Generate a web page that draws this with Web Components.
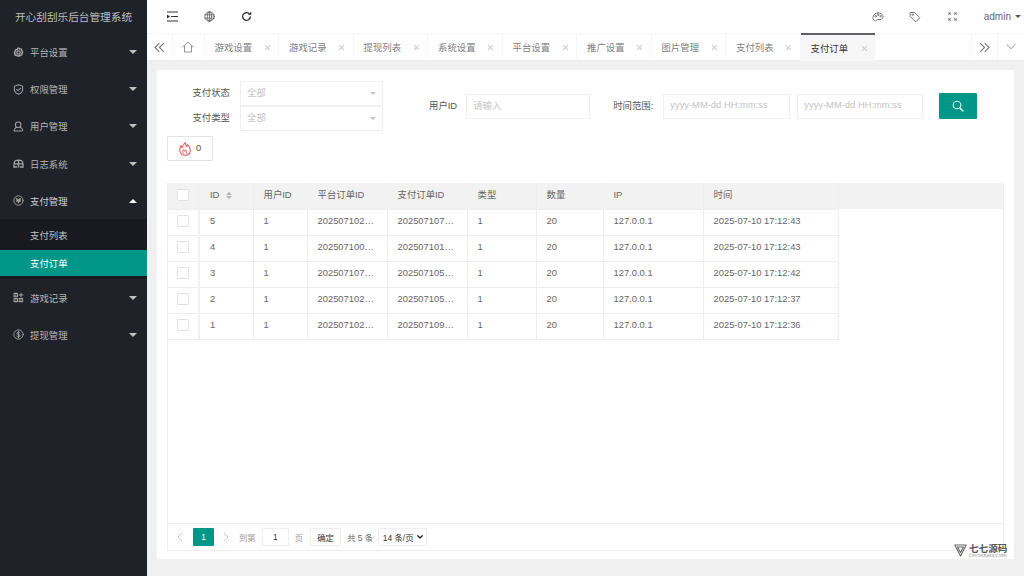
<!DOCTYPE html>
<html lang="zh"><head><meta charset="utf-8"><title>支付订单</title>
<style>
html,body{margin:0;height:100%;overflow:hidden}
body{font:9.4px "Liberation Sans","Noto Sans CJK SC",sans-serif;color:#666}
</style></head><body>
<app-shell>
  <side-menu slot="side" title-text="开心刮刮乐后台管理系统"></side-menu>
  <top-bar slot="top"></top-bar>
  <tab-bar slot="top"></tab-bar>
  <content-card slot="main">
    <filter-form></filter-form>
    <data-table></data-table>
  </content-card>
  <water-mark slot="over"></water-mark>
</app-shell>
<script>
const svg=(w,h,vb,body,extra='')=>`<svg width="${w}" height="${h}" viewBox="${vb}" fill="none" stroke="currentColor" stroke-linecap="round" stroke-linejoin="round" ${extra}>${body}</svg>`;
const I={
 gear:`<circle cx="8" cy="8" r="2.400" stroke-width="1.800"/><path stroke-width="1.900" d="M6.800 1.600h2.400l.5 1.700 1.600-.8 1.700 1.700-.8 1.600 1.700.5v2.400l-1.700.5.8 1.600-1.700 1.700-1.600-.8-.5 1.700H6.800l-.5-1.700-1.600.8L3 11.800l.8-1.600-1.700-.5V7.300l1.700-.5L3 5.200 4.700 3.500l1.600.8z"/>`,
 shield:`<path stroke-width="1.500" d="M8 1.200l6 1.900v4.400c0 3.500-2.700 6-6 7.300-3.300-1.300-6-3.800-6-7.300V3.100z"/><path stroke-width="1.500" d="M5.300 7.800l2 2 3.500-3.500"/>`,
 user:`<circle cx="7.500" cy="5.300" r="4" stroke-width="1.500"/><path stroke-width="1.500" d="M4.800 9C3 10 1.700 11.500 1.500 14.500h9.500M10.500 9c1.800.8 3.300 2.300 3.800 4.500-.5.800-1.300 1-2.800 1"/>`,
 log:`<path stroke-width="1.800" d="M1.500 13V8.500C1.500 5 4 3 8 3s6.500 2 6.500 5.500V13M8 3.500V13M1.500 8.500h13"/><path stroke-width="2" d="M1.500 13h4M10.500 13h4"/>`,
 pay:`<circle cx="8" cy="8" r="6.800" stroke-width="1.300"/><path fill="currentColor" stroke-width=".8" d="M4.800 4.500L8 6.500l3.200-2-.6 3.500 1 1-2.400.6L8 12 6.800 9.600 4.400 9l1-1z"/>`,
 game:`<g stroke-width="1.500"><rect x="1.500" y="2" width="5" height="5"/><rect x="1.500" y="9.500" width="5" height="4.500"/><rect x="9" y="9.500" width="5" height="4.500"/><path d="M11.700 1.500v5.700M8.800 4.300h5.700"/></g><path fill="currentColor" stroke="none" d="M3 3.500h2v2H3zM3 11h2v1.500H3zM10.500 11h2v1.500h-2z"/>`,
 money:`<circle cx="8" cy="8" r="6.800" stroke-width="1.300"/><path stroke-width="1.400" d="M10.300 5.800C9.800 4.900 9 4.600 8 4.600c-1.300 0-2.300.6-2.300 1.700 0 2.500 4.700 1 4.700 3.500 0 1.100-1.100 1.700-2.400 1.700-1.100 0-2-.4-2.500-1.300M8 3.300v9.500"/>`
};
const def=(n,c)=>customElements.define(n,c);
class Base extends HTMLElement{constructor(){super();this.attachShadow({mode:'open'})}}

def('app-shell',class extends Base{connectedCallback(){this.shadowRoot.innerHTML=`<style>
:host{display:grid;grid-template-columns:147px 1fr;grid-template-rows:61px 1fr;height:576px;width:1024px;background:#f0f0f0;position:relative;overflow:hidden}
.side{grid-row:1/3;min-height:0}
.top{display:flex;flex-direction:column;min-width:0;background:#fff}
.main{min-height:0;padding:9px 10px 17px;display:flex}
</style><div class="side"><slot name="side"></slot></div><div class="top"><slot name="top"></slot></div><div class="main"><slot name="main"></slot></div><slot name="over"></slot>`}});

def('side-menu',class extends Base{connectedCallback(){
 const m=[['gear','平台设置'],['shield','权限管理'],['user','用户管理'],['log','日志系统'],['pay','支付管理',1],['game','游戏记录'],['money','提现管理']];
 this.shadowRoot.innerHTML=`<style>
:host{display:block;height:100%;background:#20222a;color:#b4b4b4;font-size:9.400px}
h1{margin:0;height:33.500px;line-height:34px;text-align:center;font-size:10.650px;font-weight:400;color:#bdbdbd;white-space:nowrap}
.it{height:37.200px;display:flex;align-items:center;padding:0 10px 0 10px;box-sizing:border-box}
.it svg{width:11px;height:11px;flex:none;margin:0 6px 0 3px;color:#a2a2a2}
.it span{flex:1}
.ar{width:0;height:0;border:4px solid transparent;border-top:4px solid #c2c2c2;border-bottom:0}
.ar.up{border-top:0;border-bottom:4px solid #fff}
.open{color:#cfcfcf}
.sub{background:#191a20}
.sub div{padding-left:30px;color:#c2c2c2}
.sub div:first-child{height:30.500px;line-height:34px}
.sub .on{background:#009688;color:#fff;height:26.500px;line-height:28px}
.gap{height:2.500px;background:#191a20}
</style><h1>${this.getAttribute('title-text')}</h1>`+m.map(([i,t,o])=>`<div class="it ${o?'open':''}">${svg(11,11,'0 0 16 16',I[i])}<span>${t}</span><i class="ar ${o?'up':''}"></i></div>`+(o?`<div class="sub"><div>支付列表</div><div class="on">支付订单</div></div><div class="gap"></div>`:'')).join('')}});

def('top-bar',class extends Base{connectedCallback(){this.shadowRoot.innerHTML=`<style>
:host{display:flex;align-items:center;height:33px;padding-left:20px;color:#555;box-sizing:border-box}
svg{display:block;flex:none}
.l{display:flex;align-items:center;gap:26px;flex:1}
.r{display:flex;align-items:center;color:#777}
.admin{font-size:10px;color:#666;display:flex;align-items:center;gap:4px;margin-left:27px;margin-right:3px}
.ar{width:0;height:0;border:3px solid transparent;border-top:3px solid #555;border-bottom:0}
</style><div class="l">
${svg(11,11,'0 0 11 11','<path stroke-width="1.200" stroke="#333" d="M.5 1h10M4.500 5.500h6M.5 10h10"/><path fill="#333" stroke="none" d="M0 3.500L3 5.500 0 7.500z"/>')}
${svg(11,11,'0 0 16 16','<circle cx="8" cy="8" r="6.800" stroke-width="1.300"/><ellipse cx="8" cy="8" rx="3" ry="6.800" stroke-width="1.100"/><path stroke-width="1.100" d="M1.500 5.500h13M1.500 10.500h13M8 1.200v13.600"/>')}
${svg(11,11,'0 0 16 16','<path stroke-width="2" stroke="#333" d="M13.500 8.500a5.600 5.600 0 1 1-1.600-4.400"/><path fill="#333" stroke="none" d="M10 5.500h5V.8z"/>')}
</div><div class="r">
${svg(12,12,'0 0 16 16','<path stroke-width="1.300" d="M8 2.500C4 2.500 1.300 5.300 1.300 8.800c0 2.300 1.700 4.200 3.200 4.200s1.700-1.600 3.200-1.600h3c2.200 0 4-1.500 4-3.500 0-3.200-3-5.400-6.700-5.400z"/><circle cx="4.800" cy="7" r="1" stroke-width="1"/><circle cx="8" cy="5.300" r="1" stroke-width="1"/><circle cx="11.300" cy="6.800" r="1" stroke-width="1"/>')}
<span style="width:25px"></span>
${svg(12,12,'0 0 16 16','<path stroke-width="1.300" d="M2 2h5.500l7 7-5.500 5.500-7-7z"/><circle cx="5" cy="5" r="1.100" stroke-width="1.100"/>')}
<span style="width:27px"></span>
${svg(9,9,'0 0 10 10','<path stroke-width="1" d="M1 3V1h2M7 1h2v2M9 7v2H7M3 9H1V7"/><path stroke-width="1" d="M1 1l2.200 2.200M9 1L6.800 3.200M9 9L6.800 6.800M1 9l2.200-2.200"/>')}
<span class="admin">admin <i class="ar"></i></span>
</div>`}});

def('tab-bar',class extends Base{connectedCallback(){
 const t=['游戏设置','游戏记录','提现列表','系统设置','平台设置','推广设置','图片管理','支付列表','支付订单'];
 this.shadowRoot.innerHTML=`<style>
:host{display:flex;height:28px;box-sizing:border-box;border-top:1px solid #f6f6f6;border-bottom:1px solid #ececec;color:#808080;font-size:9.400px;background:#fff}
.b{display:flex;align-items:center;justify-content:center;border-right:1px solid #f6f6f6;box-sizing:border-box;flex:none;color:#777}
.tabs{display:flex;flex:1;min-width:0}
.t{width:74.500px;flex:none;box-sizing:border-box;border-right:1px solid #f6f6f6;display:flex;align-items:center;padding:0 0 2px 10px;white-space:nowrap;position:relative;height:27px}
.t u{text-decoration:none;flex:1}
.t b{width:6px;height:6px;margin:2px 8px 0 0;flex:none;position:relative}
.t b::before,.t b::after{content:"";position:absolute;left:-.5px;top:2.500px;width:7px;height:.8px;background:#c8c8c8;transform:rotate(45deg)}
.t b::after{transform:rotate(-45deg)}
.t.on{background:#f6f6f6;color:#333;border-right:0;margin-top:-1px;height:28px;border-top:2px solid #5f5f68;padding-bottom:1px}
</style><div class="b" style="width:26px">${svg(11,9,'0 0 12 10','<path stroke-width="1.200" d="M5.500 .5L1 5l4.500 4.500M10.500 .5L6 5l4.500 4.500"/>')}</div>
<div class="b" style="width:31.500px">${svg(12,12,'0 0 12 12','<path stroke-width=".9" stroke="#888" d="M.8 6L6 1l5.200 5M2.500 5v6h7V5"/>')}</div>
<div class="tabs">${t.map((x,i)=>`<div class="t ${i==8?'on':''}"><u>${x}</u><b></b></div>`).join('')}</div>
<div class="b" style="width:27px;border-left:1px solid #f6f6f6">${svg(11,9,'0 0 12 10','<path stroke-width="1.200" d="M1.500 .5L6 5 1.500 9.500M6.500 .5L11 5 6.500 9.500"/>')}</div>
<div class="b" style="width:26px;border:0">${svg(10,6,'0 0 11 7','<path stroke-width="1" d="M1 1l4.500 4.500L10 1"/>')}</div>`}});

def('content-card',class extends Base{connectedCallback(){this.shadowRoot.innerHTML=`<style>
:host{display:flex;flex-direction:column;flex:1;min-width:0;background:#fff;padding:0 10px 8px;box-sizing:border-box}
</style><slot></slot>`}});

def('filter-form',class extends Base{connectedCallback(){this.shadowRoot.innerHTML=`<style>
:host{display:block;height:113px;flex:none;box-sizing:border-box;padding-top:11px;color:#555}
.row{display:flex;align-items:flex-start}
.col{width:216px;margin-right:46px;flex:none}
.fld{display:flex;align-items:center;height:25px}
.fld label{width:63px;text-align:right;margin-right:10px;flex:none;padding-bottom:3px}
.sel{width:143px;height:25px;box-sizing:border-box;border:1px solid #eee;border-top-color:#f2f2f2;display:flex;align-items:center;padding:0 6px 4px;color:#c4c4c4;justify-content:space-between}
.sel i{width:0;height:0;border:3.500px solid transparent;border-top:3.500px solid #c2c2c2;border-bottom:0;margin:3px 0 0}
.in{height:25px;box-sizing:border-box;border:1px solid #f0f0f0;display:flex;align-items:center;padding:0 6px 3px;color:#c4c4c4;white-space:nowrap;flex:none}
.mid{display:flex;align-items:center;margin-top:12px}
.mid span{padding-bottom:3px}
.btn{width:38px;height:26px;background:#009688;border-radius:1px;display:flex;align-items:center;justify-content:center;color:#e6f4f3;margin-left:16px}
.fire{display:flex;align-items:center;justify-content:center;gap:5px;width:46px;height:25px;box-sizing:border-box;border:1px solid #e4e4e4;border-radius:1px;margin-top:5px;color:#555}
.fire span{padding-bottom:2px}
.fire svg{color:#f35a5a}
</style><div class="row"><div class="col">
<div class="fld"><label>支付状态</label><div class="sel">全部<i></i></div></div>
<div class="fld"><label>支付类型</label><div class="sel">全部<i></i></div></div>
</div>
<div class="mid"><span style="margin-right:9px">用户ID</span><div class="in" style="width:124px">请输入</div>
<span style="margin:0 10px 0 23px">时间范围:</span><div class="in" style="width:127px">yyyy-MM-dd HH:mm:ss</div><div class="in" style="width:126px;margin-left:7px">yyyy-MM-dd HH:mm:ss</div>
<div class="btn">${svg(12,12,'0 0 12 12','<circle cx="5" cy="5" r="3.800" stroke-width="1.100"/><path stroke-width="1.500" d="M8 8l3 3"/>')}</div></div></div>
<div class="fire">${svg(12,14,'0 0 12 14','<path stroke-width="1.100" d="M6 13.300c-3.200 0-5.200-2.100-5.200-5 0-1.800.5-3.300 1.300-4.800.3 1.200.7 1.800 1.200 2.200C3.500 3.800 4.700 1.600 6.300.7c-.1 1.600.8 3 1.400 3.700.4-.4.700-1.100.8-1.800 1.800 1.600 2.800 3.500 2.800 5.700 0 2.900-2 5-5.300 5z"/><path stroke-width="1" d="M4.300 11.500C3.300 10 3.700 8.500 4.600 7.500c.2 1 .7 1.600 1.300 1.800.3-.5.500-1 .6-1.500.9 1 1.400 2.300.9 3.700"/>')}<span>0</span></div>`}});

def('data-table',class extends Base{connectedCallback(){
 const w=[31,54,54,80,80,69,67,100,135];
 const h=['','ID','用户ID','平台订单ID','支付订单ID','类型','数量','IP','时间'];
 const d=[[5,'202507102…','202507107…','17:12:43'],[4,'202507100…','202507101…','17:12:43'],[3,'202507107…','202507105…','17:12:42'],[2,'202507102…','202507105…','17:12:37'],[1,'202507102…','202507109…','17:12:36']];
 const box='<i class="cb"></i>';
 this.shadowRoot.innerHTML=`<style>
:host{display:flex;flex-direction:column;flex:1;min-height:0;border:1px solid #eee;border-top:0;color:#666}
.tb{flex:1;min-height:0}
table{border-collapse:collapse;table-layout:fixed;width:670px}
td,th{height:26px;padding:0 0 3px 10px;box-sizing:border-box;border:1px solid #eee;border-width:0 1px 1px 0;font-weight:400;text-align:left;white-space:nowrap;overflow:hidden}
td:first-child,th:first-child{padding:0 0 2px;text-align:center;border-right:2px solid #f1f1f1}
thead tr{background:#f2f2f2}
.wrap{background:linear-gradient(#f2f2f2,#f2f2f2) 0 0/100% 26px no-repeat}
.cb{display:inline-block;width:12px;height:12px;box-sizing:border-box;border:1px solid #e2e2e2;background:#fff;border-radius:1px;vertical-align:middle}
.so{display:inline-block;margin-left:7px;vertical-align:middle;width:6px}
.so::before,.so::after{content:"";display:block;width:0;height:0;border:3px solid transparent}
.so::before{border-bottom:3px solid #b2b2b2;border-top:0;margin-bottom:1.500px}
.so::after{border-top:3px solid #b2b2b2;border-bottom:0}
.pg{height:27px;flex:none;border-top:1px solid #eee;display:flex;align-items:center;box-sizing:border-box;padding-left:9px;font-size:8.400px;color:#999}
.cur{width:21px;height:18px;background:#009688;color:#fff;display:flex;align-items:center;justify-content:center;border-radius:1px;font-size:8.400px;margin:0 9px 0 10px}
.num{width:27px;height:18px;box-sizing:border-box;border:1px solid #eee;display:flex;align-items:center;justify-content:center;color:#333;margin:0 6px}
.ok{width:31px;height:18px;box-sizing:border-box;border:1px solid #eee;display:flex;align-items:center;justify-content:center;color:#333;margin:0 6px 0 7px;font-size:8.400px}
.sz{width:49px;height:18px;box-sizing:border-box;border:1px solid #eee;display:flex;align-items:center;justify-content:center;gap:3px;color:#333;margin-left:5px;border-radius:1px;white-space:nowrap}
.g{color:#666}
svg{flex:none}
</style><div class="tb"><div class="wrap"><table><colgroup>${w.map(x=>`<col style="width:${x}px">`).join('')}</colgroup>
<thead><tr>${h.map((x,i)=>`<th>${i==0?box:x}${i==1?'<i class="so"></i>':''}</th>`).join('')}</tr></thead>
<tbody>${d.map(r=>`<tr><td>${box}</td><td>${r[0]}</td><td>1</td><td>${r[1]}</td><td>${r[2]}</td><td>1</td><td>20</td><td>127.0.0.1</td><td>2025-07-10 ${r[3]}</td></tr>`).join('')}</tbody></table></div></div>
<div class="pg">${svg(6,10,'0 0 6 10','<path stroke="#c8c8c8" d="M5 1L1 5l4 4"/>')}<div class="cur">1</div>${svg(6,10,'0 0 6 10','<path stroke="#c8c8c8" d="M1 1l4 4-4 4"/>')}
<span style="margin-left:10px">到第</span><div class="num">1</div><span>页</span><div class="ok">确定</div><span class="g">共 5 条</span><div class="sz">14 条/页 ${svg(6,4,'0 0 6 4','<path stroke="#222" stroke-width="1.300" d="M.7.7L3 3 5.300.7"/>')}</div></div>`}});

def('water-mark',class extends Base{connectedCallback(){this.shadowRoot.innerHTML=`<style>
:host{position:absolute;left:954px;top:544px;display:flex;align-items:flex-start;gap:2px;color:#555;pointer-events:none}
b{display:block;font:700 9.600px/9.500px "Noto Sans CJK SC",serif;white-space:nowrap}
small{display:block;font-size:2.900px;line-height:4px;color:#888;white-space:nowrap}
</style>${svg(13,13,'0 0 13 13','<path stroke-width="1.100" stroke="#666" d="M.8 1h11.400L6.500 12zM3.500 3h6L6.500 8.500z"/>')}<div><b>七七源码</b><small>提供分享优质源码及学习资料</small></div>`}});
</script>
</body></html>
